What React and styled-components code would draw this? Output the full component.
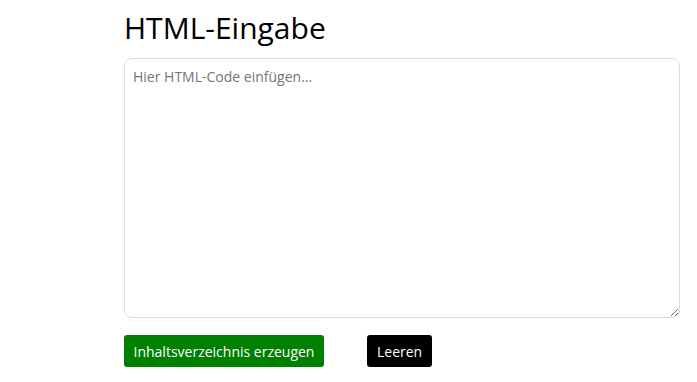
import React from "react";
import styled, { createGlobalStyle } from "styled-components";

const GlobalStyle = createGlobalStyle`
  html, body {
    margin: 0;
    padding: 0;
    background: #fff;
  }
  body {
    font-family: "Open Sans", "Liberation Sans", sans-serif;
    color: #000;
  }
`;

const Page = styled.div`
  width: 556px;
  margin-left: 124px;
  padding-top: 10px;
  display: flex;
  flex-direction: column;
`;

const Title = styled.h1`
  margin: 0 0 12px;
  font-size: 30px;
  font-weight: 400;
  line-height: 1.2;
`;

const CodeInput = styled.textarea`
  box-sizing: border-box;
  width: 100%;
  height: 260px;
  padding: 8px;
  border: 1px solid #ddd;
  border-radius: 8px;
  font-family: inherit;
  font-size: 14px;
  line-height: 1.4;
  resize: vertical;
  outline: none;

  &::placeholder {
    color: #757575;
  }
`;

const Actions = styled.div`
  display: flex;
  gap: 43px;
  margin-top: 17px;
`;

const Button = styled.button`
  height: 32px;
  padding: 0 ${(p) => (p.$dark ? "10px" : "9.5px")};
  border: none;
  border-radius: 3px;
  background: ${(p) => (p.$dark ? "#000" : "#008000")};
  color: #fff;
  font-family: inherit;
  font-size: 14px;
  cursor: pointer;
`;

export default function App() {
  return (
    <>
      <GlobalStyle />
      <Page>
        <Title>HTML-Eingabe</Title>
        <CodeInput placeholder="Hier HTML-Code einfügen..." />
        <Actions>
          <Button>Inhaltsverzeichnis erzeugen</Button>
          <Button $dark>Leeren</Button>
        </Actions>
      </Page>
    </>
  );
}
